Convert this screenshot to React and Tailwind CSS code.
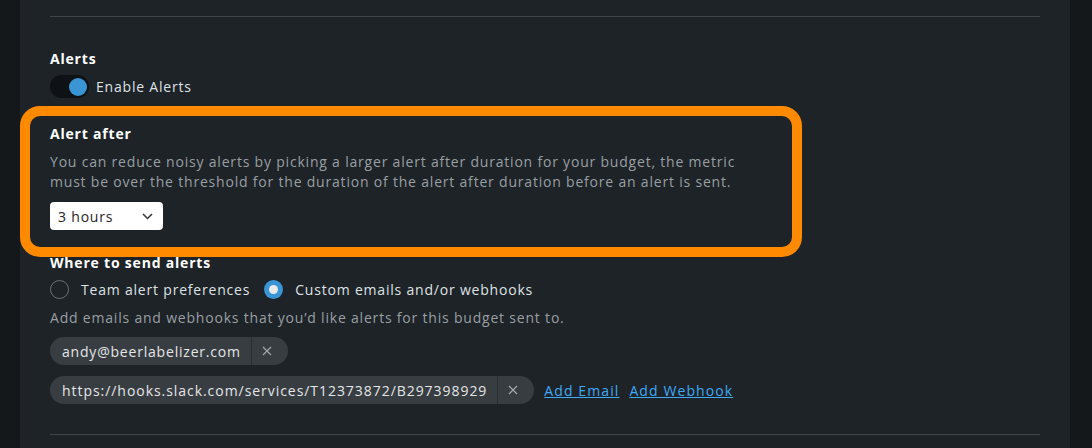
import React from 'react';

const Chip = ({ label, wide }) => (
  <div className="flex items-center h-7 rounded-full bg-[#383d41] text-[#e4e6e8] text-[14px]">
    <span className={`pl-3 pr-2.5 ${wide ? 'tracking-[0.95px]' : ''}`}>{label}</span>
    <span className="self-stretch w-px bg-[#2a2e31]" />
    <button className="pl-2.5 pr-4 text-[#a3a7aa]">
      <svg width="10" height="10" viewBox="0 0 10 10" stroke="currentColor" strokeWidth="1.2">
        <path d="M1 1l8 8M9 1l-8 8" />
      </svg>
    </button>
  </div>
);

const Radio = ({ checked, label }) => (
  <label className="flex items-center gap-3">
    {checked ? (
      <span className="w-[19px] h-[19px] rounded-full bg-[#3a95d4] flex items-center justify-center">
        <span className="w-[9px] h-[9px] rounded-full bg-[#e8eaec]" />
      </span>
    ) : (
      <span className="w-[19px] h-[19px] rounded-full border border-[#6b7074]" />
    )}
    <span className="text-[#dfe2e4] text-[14px]">{label}</span>
  </label>
);

export default function App() {
  return (
    <div
      className="w-[1092px] h-[448px] bg-[#14181b] flex overflow-hidden tracking-[0.8px]"
      style={{ fontFamily: '"Open Sans", sans-serif' }}
    >
      <div className="ml-[20px] w-[1050px] h-full bg-[#1d2327] pt-4">
        <div className="mx-[30px] border-t border-[#414547]" />

        <div className="px-[30px] pt-[33px]">
          <h3 className="text-white font-bold text-[14px] leading-[18px]">Alerts</h3>
          <div className="flex items-center gap-[7px] mt-[7px]">
            <div className="w-[39px] h-[23px] rounded-full bg-[#0e1215] flex items-center justify-end pr-[2px]">
              <div className="w-[18px] h-[18px] rounded-full bg-[#3a95d4]" />
            </div>
            <span className="text-[#dfe2e4] text-[14px]">Enable Alerts</span>
          </div>
        </div>

        <div className="mt-[8px] w-[782px] h-[151px] border-[10px] border-[#ff8a00] rounded-[20px] px-[20px] pt-[9px]">
          <h3 className="text-white font-bold text-[14px] leading-[18px]">Alert after</h3>
          <p className="mt-[9px] text-[#9a9fa3] text-[14px] leading-[20px]">
            You can reduce noisy alerts by picking a larger alert after duration for your budget, the metric
            <br />
            must be over the threshold for the duration of the alert after duration before an alert is sent.
          </p>
          <div className="mt-[10px] w-[113px] h-[28px] bg-white rounded-[4px] flex items-center justify-between pl-2 pr-2.5 text-[#1f2326] text-[14px]">
            <span>3 hours</span>
            <svg width="11" height="7" viewBox="0 0 11 7" fill="none" stroke="#333" strokeWidth="1.5">
              <path d="M1 1l4.5 4.5L10 1" />
            </svg>
          </div>
        </div>

        <div className="px-[30px]">
          <h3 className="text-white font-bold text-[14px] leading-[16px] -mt-[2px]">Where to send alerts</h3>
          <div className="flex items-center gap-[14px] mt-[8px]">
            <Radio label="Team alert preferences" />
            <Radio checked label="Custom emails and/or webhooks" />
          </div>
          <p className="mt-[8px] text-[#9a9fa3] text-[14px] leading-[20px]">
            Add emails and webhooks that you’d like alerts for this budget sent to.
          </p>
          <div className="mt-[9px] flex flex-col gap-[11px]">
            <div className="flex">
              <Chip label="andy@beerlabelizer.com" />
            </div>
            <div className="flex items-center gap-[10px] tracking-[1.1px]">
              <Chip wide label="https://hooks.slack.com/services/T12373872/B297398929" />
              <a className="text-[#3fa9f5] underline text-[14px]">Add Email</a>
              <a className="text-[#3fa9f5] underline text-[14px]">Add Webhook</a>
            </div>
          </div>
          <div className="mt-[30px] border-t border-[#414547]" />
        </div>
      </div>
    </div>
  );
}
